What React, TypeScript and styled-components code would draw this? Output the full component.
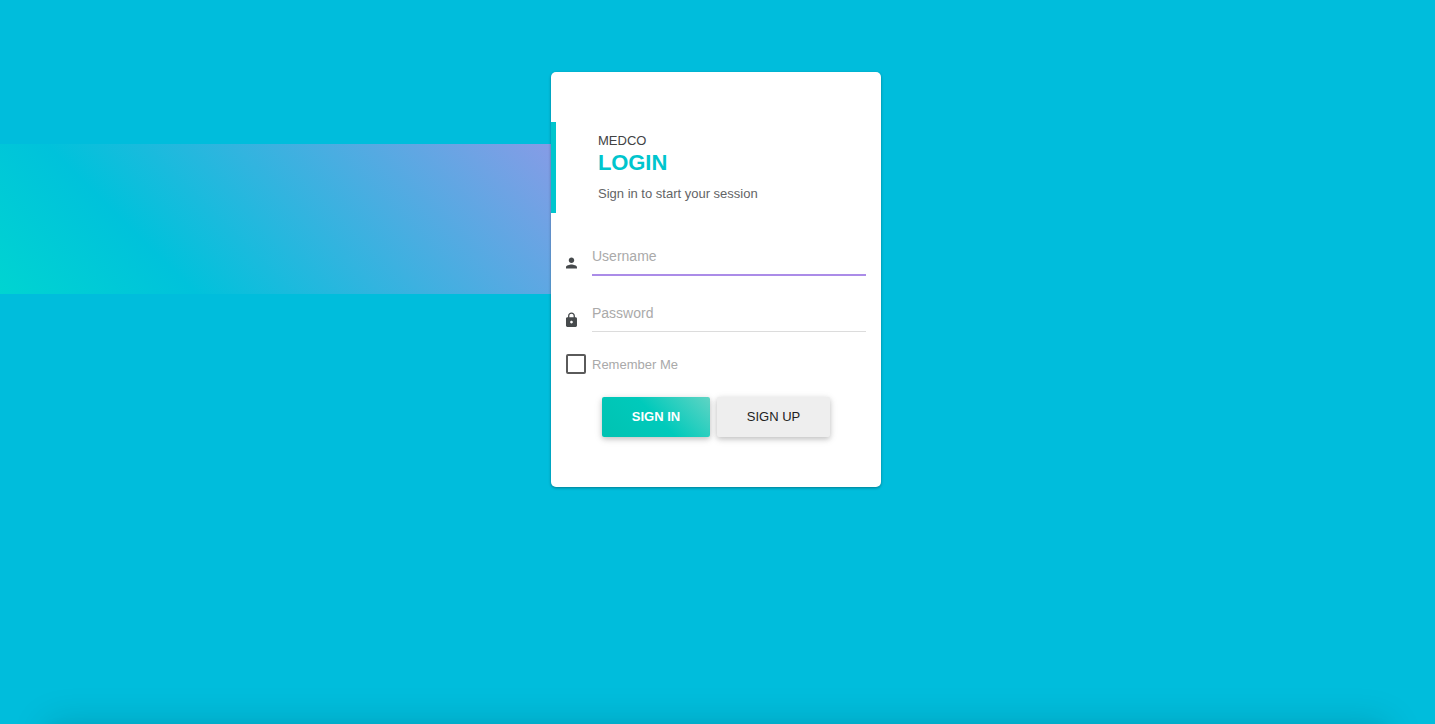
import React from 'react';
import styled, { createGlobalStyle } from 'styled-components';

const GlobalStyle = createGlobalStyle`
  * { box-sizing: border-box; }
  body {
    margin: 0;
    background: #00bddc;
    font-family: "Liberation Sans", Arial, sans-serif;
    font-size: 13px;
    color: #414244;
  }
`;

const Page = styled.div`
  height: 100vh;
  display: flex;
  flex-direction: column;
  overflow: hidden;
`;

const Main = styled.main`
  flex: 1;
  display: flex;
  align-items: flex-start;
  padding-top: 72px;
`;

const Band = styled.div`
  width: 551px;
  height: 150px;
  margin-top: 72px;
  background: linear-gradient(45deg, #00d4d1 0%, #00c2db 28%, #869ce6 100%);
`;

const FooterShadow = styled.div`
  flex: none;
  height: 40px;
  margin: 0 48px -40px;
  box-shadow: 0 0 38px rgba(0, 0, 0, 0.15), 0 0 10px rgba(0, 0, 0, 0.03);
`;

const Card = styled.section`
  width: 330px;
  height: 415px;
  padding-top: 50px;
  background: #fff;
  border-radius: 5px;
  box-shadow: 0 1px 3px rgba(0, 0, 0, 0.34);
`;

const Header = styled.header`
  height: 91px;
  padding: 10px 0 0 42px;
  border-left: 5px solid #00c5cd;
`;

const Brand = styled.div`
  line-height: 18px;
`;

const Title = styled.h1`
  margin: 0;
  font-size: 22px;
  line-height: 26px;
  letter-spacing: -0.1px;
  color: #00c5cd;
`;

const Subtitle = styled.div`
  margin-top: 9px;
  line-height: 18px;
  color: #636466;
`;

const Form = styled.form`
  padding: 24px 15px 0;
`;

const Field = styled.label<{ $gap: number }>`
  display: flex;
  height: 39px;
  margin-bottom: ${(p) => p.$gap}px;
`;

const IconSlot = styled.span`
  width: 26px;
  padding-top: 18px;

  svg {
    display: block;
    margin-left: -2px;
  }
`;

const Input = styled.input<{ $active?: boolean }>`
  flex: 1;
  min-width: 0;
  height: ${(p) => (p.$active ? 39 : 38)}px;
  padding: ${(p) => (p.$active ? 0 : 1)}px 0 0;
  border: 0;
  border-bottom: ${(p) => (p.$active ? '2px solid #ab8ce8' : '1px solid #dcdcdc')};
  outline: 0;
  background: transparent;
  font: 14px "Liberation Sans", Arial, sans-serif;

  &::placeholder {
    color: #aaa;
    opacity: 1;
  }
`;

const Remember = styled.label`
  display: flex;
  align-items: center;
  gap: 6px;
  height: 20px;
  color: #a9a9a9;
`;

const Checkbox = styled.input`
  appearance: none;
  width: 20px;
  height: 20px;
  margin: 0;
  border: 2px solid #5a5a5a;
  border-radius: 2px;
`;

const Actions = styled.div`
  display: flex;
  gap: 7px;
  padding: 23px 0 0 36px;
`;

const Button = styled.button<{ $primary?: boolean }>`
  width: ${(p) => (p.$primary ? 108 : 113)}px;
  height: 40px;
  padding: 0 0 2px;
  border: 0;
  border-radius: 2px;
  background: ${(p) =>
    p.$primary ? 'linear-gradient(45deg, #00c2b2 0%, #00cabb 50%, #60d4c4 100%)' : '#eee'};
  color: ${(p) => (p.$primary ? '#fff' : '#222')};
  font: ${(p) => (p.$primary ? 'bold' : 'normal')} 13px "Liberation Sans", Arial, sans-serif;
  box-shadow: 0 2px 5px rgba(0, 0, 0, 0.16), 0 2px 8px rgba(0, 0, 0, 0.12);
`;

const PersonIcon = () => (
  <svg width="16" height="16" viewBox="1.1 0.3 23.3 23.3" fill="#464a4c">
    <path d="M12 12c2.21 0 4-1.79 4-4s-1.79-4-4-4-4 1.79-4 4 1.79 4 4 4zm0 2c-2.67 0-8 1.34-8 4v2h16v-2c0-2.66-5.33-4-8-4z" />
  </svg>
);

const LockIcon = () => (
  <svg width="16" height="16" viewBox="1.1 0.3 23.3 23.3" fill="#464a4c">
    <path d="M18 8h-1V6c0-2.76-2.24-5-5-5S7 3.24 7 6v2H6c-1.1 0-2 .9-2 2v10c0 1.1.9 2 2 2h12c1.1 0 2-.9 2-2V10c0-1.1-.9-2-2-2zm-6 9c-1.1 0-2-.9-2-2s.9-2 2-2 2 .9 2 2-.9 2-2 2zm3.1-9H8.9V6c0-1.71 1.39-3.1 3.1-3.1s3.1 1.39 3.1 3.1v2z" />
  </svg>
);

export default function App() {
  return (
    <Page>
      <GlobalStyle />
      <Main>
        <Band />
        <Card>
          <Header>
            <Brand>MEDCO</Brand>
            <Title>LOGIN</Title>
            <Subtitle>Sign in to start your session</Subtitle>
          </Header>
          <Form>
            <Field $gap={18}>
              <IconSlot><PersonIcon /></IconSlot>
              <Input $active placeholder="Username" />
            </Field>
            <Field $gap={21}>
              <IconSlot><LockIcon /></IconSlot>
              <Input type="password" placeholder="Password" />
            </Field>
            <Remember>
              <Checkbox type="checkbox" />
              Remember Me
            </Remember>
            <Actions>
              <Button type="button" $primary>SIGN IN</Button>
              <Button type="button">SIGN UP</Button>
            </Actions>
          </Form>
        </Card>
      </Main>
      <FooterShadow />
    </Page>
  );
}
